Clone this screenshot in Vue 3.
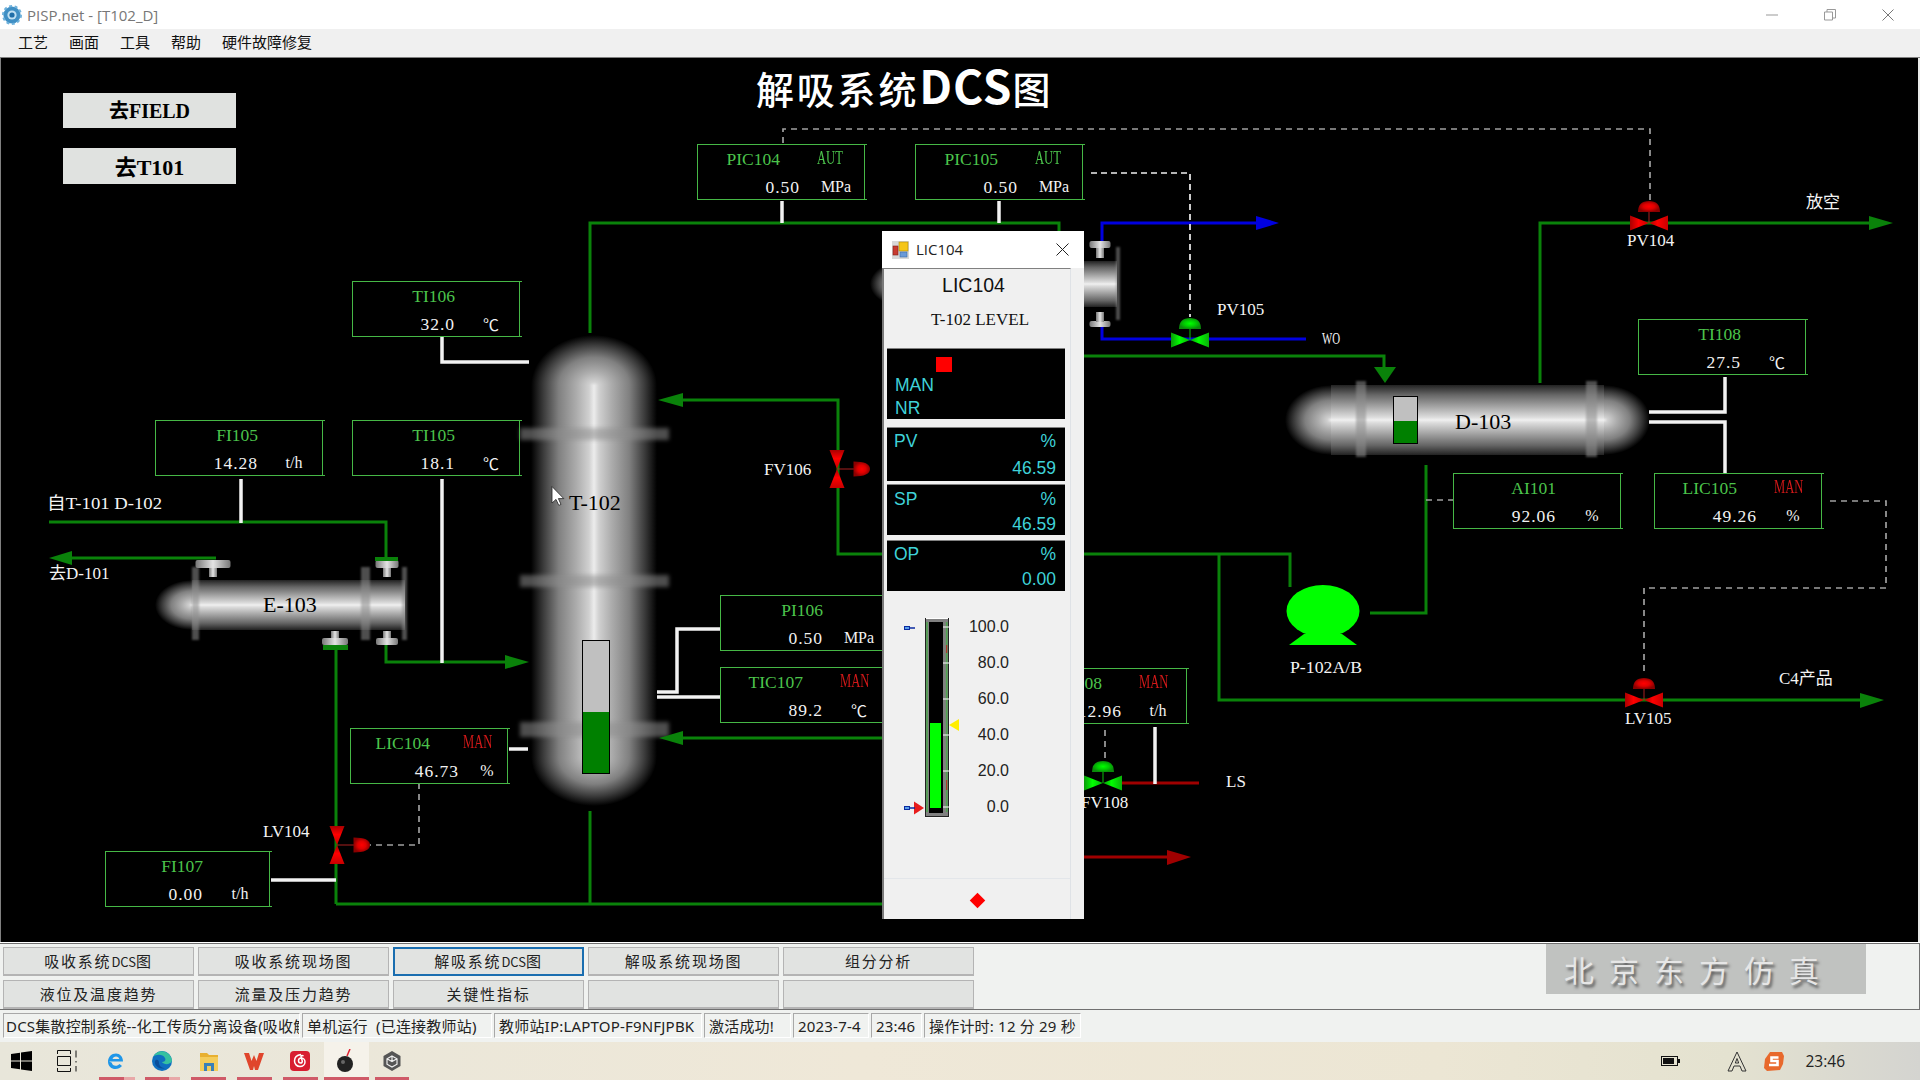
<script setup>
const menus = ["工艺", "画面", "工具", "帮助", "硬件故障修复"];

const tags = [
  { x: 697, y: 144, name: "PIC104", mode: "AUT", value: "0.50", unit: "MPa", ok: true },
  { x: 915, y: 144, name: "PIC105", mode: "AUT", value: "0.50", unit: "MPa", ok: true },
  { x: 352, y: 281, name: "TI106", value: "32.0", unit: "℃" },
  { x: 155, y: 420, name: "FI105", value: "14.28", unit: "t/h" },
  { x: 352, y: 420, name: "TI105", value: "18.1", unit: "℃" },
  { x: 350, y: 728, w: 160, split: 108, compact: true, name: "LIC104", mode: "MAN", value: "46.73", unit: "%" },
  { x: 720, y: 595, name: "PI106", value: "0.50", unit: "MPa" },
  { x: 720, y: 667, name: "TIC107", mode: "MAN", value: "89.2", unit: "℃" },
  { x: 1019, y: 668, name: "FIC108", mode: "MAN", value: "12.96", unit: "t/h" },
  { x: 1638, y: 319, name: "TI108", value: "27.5", unit: "℃" },
  { x: 1453, y: 473, name: "AI101", value: "92.06", unit: "%" },
  { x: 1654, y: 473, name: "LIC105", mode: "MAN", value: "49.26", unit: "%" },
  { x: 105, y: 851, w: 167, split: 97, name: "FI107", value: "0.00", unit: "t/h" },
];

const pipes = [
  { cls: "green", pts: "590,333 590,223 1059,223 1059,232" },
  { cls: "green", pts: "49,522 386,522 386,560" },
  { cls: "green", pts: "216,558 65,558" },
  { cls: "green", pts: "386,645 386,662 510,662" },
  { cls: "green", pts: "336,904 336,648" },
  { cls: "green", pts: "670,400 838,400 838,554 882,554" },
  { cls: "green", pts: "590,811 590,904" },
  { cls: "green", pts: "336,904 882,904" },
  { cls: "green", pts: "670,738 882,738" },
  { cls: "green", pts: "1084,356 1384,356 1384,370" },
  { cls: "green", pts: "1540,383 1540,223 1872,223" },
  { cls: "green", pts: "1084,554 1290,554 1290,587" },
  { cls: "green", pts: "1219,554 1219,700 1864,700" },
  { cls: "green", pts: "1426,465 1426,613 1370,613" },
  { cls: "blue", pts: "1102,241 1102,223 1260,223" },
  { cls: "blue", pts: "1102,327 1102,339 1306,339" },
  { cls: "red", pts: "1122,783 1199,783" },
  { cls: "red", pts: "1084,857 1172,857" },
  { cls: "white", pts: "782,201 782,223" },
  { cls: "white", pts: "999,201 999,223" },
  { cls: "white", pts: "442,337 442,362 529,362" },
  { cls: "white", pts: "241,479 241,523" },
  { cls: "white", pts: "442,479 442,663" },
  { cls: "white", pts: "509,749 528,749" },
  { cls: "white", pts: "657,692 677,692 677,629 720,629" },
  { cls: "white", pts: "657,697 720,697" },
  { cls: "white", pts: "1649,412 1725,412 1725,377" },
  { cls: "white", pts: "1649,422 1725,422 1725,473" },
  { cls: "white", pts: "1155,727 1155,784" },
  { cls: "white", pts: "271,880 336,880" },
  { cls: "dash", pts: "783,143 783,129 1650,129 1650,200" },
  { cls: "dash", pts: "1830,501 1886,501 1886,588 1644,588 1644,673" },
  { cls: "dash", pts: "1426,500 1453,500" },
  { cls: "dash", pts: "419,783 419,845 367,845" },
  { cls: "dash", pts: "1105,730 1105,760" },
  { cls: "dash-white", pts: "1091,173 1190,173 1190,317" },
];

const arrows = [
  { fill: "#0a820a", pts: "49,558 72,551 72,565" },
  { fill: "#0a820a", pts: "529,662 505,655 505,669" },
  { fill: "#0a820a", pts: "658,400 683,393 683,407" },
  { fill: "#0a820a", pts: "659,738 683,731 683,745" },
  { fill: "#0a820a", pts: "1385,383 1374,367 1396,367" },
  { fill: "#0a820a", pts: "1893,223 1869,216 1869,230" },
  { fill: "#0a820a", pts: "1884,700 1860,693 1860,708" },
  { fill: "#0000e0", pts: "1279,223 1256,216 1256,230" },
  { fill: "#a00000", pts: "1191,857 1167,850 1167,865" },
];

const valves = [
  { x: 1649, y: 223, color: "red", rot: 0, arm: 0, dome: "" },
  { x: 1644, y: 700, color: "red", rot: 0, arm: 0, dome: "" },
  { x: 1190, y: 340, color: "green", rot: 0, arm: 0, dome: "" },
  { x: 1103, y: 783, color: "green", rot: 0, arm: 0, dome: "" },
  { x: 837, y: 469, color: "red", rot: 90, arm: 5, dome: "scale(.68 1.5)" },
  { x: 337, y: 845, color: "red", rot: 90, arm: 5, dome: "scale(.68 1.5)" },
];

const nozzles = [
  { x: 213, capY: 560, capH: 8, capW: 35, neckY: 568, neckH: 9 },
  { x: 387, capY: 560, capH: 8, capW: 23, neckY: 568, neckH: 9 },
  { x: 335, capY: 638, capH: 7, capW: 26, neckY: 631, neckH: 7 },
  { x: 387, capY: 638, capH: 7, capW: 22, neckY: 631, neckH: 7 },
  { x: 1100, capY: 241, capH: 7, capW: 21, neckY: 248, neckH: 10 },
  { x: 1100, capY: 321, capH: 6, capW: 21, neckY: 312, neckH: 10 },
];

const flanges = [
  { x: 520, y: 428, w: 149, h: 12, soft: "blur-wide" },
  { x: 520, y: 575, w: 149, h: 12, soft: "blur-wide" },
  { x: 520, y: 722, w: 149, h: 15, soft: "blur-wide" },
  { x: 1356, y: 381, w: 10, h: 76 },
  { x: 1586, y: 381, w: 11, h: 76 },
  { x: 192, y: 567, w: 7, h: 73 },
  { x: 361, y: 567, w: 9, h: 73 },
  { x: 402, y: 567, w: 5, h: 73 },
  { x: 1116, y: 247, w: 4, h: 73 },
];

const labels = [
  { x: 47, y: 503, text: "自T-101 D-102", len: 115 },
  { x: 49, y: 573, text: "去D-101" },
  { x: 764, y: 469, text: "FV106" },
  { x: 263, y: 831, text: "LV104" },
  { x: 1217, y: 309, text: "PV105" },
  { x: 1322, y: 338, text: "WO", len: 18 },
  { x: 1627, y: 240, text: "PV104" },
  { x: 1806, y: 202, text: "放空" },
  { x: 1290, y: 667, text: "P-102A/B", len: 72 },
  { x: 1625, y: 718, text: "LV105" },
  { x: 1779, y: 678, text: "C4产品" },
  { x: 1081, y: 802, text: "FV108" },
  { x: 1226, y: 781, text: "LS" },
];

const buttons = [
  { text: "吸收系统", latin: "DCS", tail: "图" },
  { text: "吸收系统现场图" },
  { text: "解吸系统", latin: "DCS", tail: "图", active: true },
  { text: "解吸系统现场图" },
  { text: "组分分析" },
  { text: "液位及温度趋势" },
  { text: "流量及压力趋势" },
  { text: "关键性指标" },
  { text: "" },
  { text: "" },
];

const statusCells = [
  { w: 297, text: "DCS集散控制系统--化工传质分离设备(吸收解" },
  { w: 190, text: "单机运行  (已连接教师站)" },
  { w: 208, text: "教师站IP:LAPTOP-F9NFJPBK" },
  { w: 87, text: "激活成功!" },
  { w: 76, text: "2023-7-4" },
  { w: 51, text: "23:46" },
  { w: 157, text: "操作计时: 12 分 29 秒" },
];

const logoChars = ["北", "京", "东", "方", "仿", "真"];
const scale = ["100.0", "80.0", "60.0", "40.0", "20.0", "0.0"];
const ticks = [627, 663, 699, 735, 771, 807];
const underlines = [
  { x: 99, w: 36, split: true },
  { x: 145, w: 35, split: true },
  { x: 191, w: 35 },
  { x: 237, w: 35 },
  { x: 283, w: 35 },
  { x: 324, w: 45 },
  { x: 375, w: 34 },
];

const tagStyle = (tag) => ({
  left: `${tag.x}px`,
  top: `${tag.y - 58}px`,
  width: `${tag.w || 170}px`,
  gridTemplateColumns: `${tag.split || 102}px 1fr`,
});
</script>

<template>
  <div class="app">
    <header class="titlebar">
      <svg class="app-icon" width="20" height="20" viewBox="0 0 20 20">
        <circle cx="10" cy="10" r="8.6" fill="#3f8fc4" />
        <circle cx="10" cy="10" r="9" fill="none" stroke="#6fb2dc" stroke-width="2" stroke-dasharray="3 2.6" />
        <circle cx="10" cy="10" r="4.6" fill="#bfe0f2" />
        <circle cx="10" cy="10" r="2.6" fill="#1f6ea8" />
      </svg>
      <span class="title-text">PISP.net - [T102_D]</span>
      <div class="win-controls">
        <svg width="12" height="12" viewBox="0 0 12 12"><path d="M0 6h12" stroke="#999" fill="none" /></svg>
        <svg width="12" height="12" viewBox="0 0 12 12"><path d="M.5 3h8v8h-8zM3 3V.5h8.5V9H8.5" stroke="#999" fill="none" /></svg>
        <svg width="12" height="12" viewBox="0 0 12 12"><path d="M.5.5l11 11M11.5.5l-11 11" stroke="#777" fill="none" /></svg>
      </div>
    </header>

    <nav class="menubar">
      <span v-for="m in menus" :key="m" class="menu-item">{{ m }}</span>
    </nav>

    <main class="canvas">
      <svg class="diagram" width="1920" height="884" viewBox="0 58 1920 884">
        <defs>
          <linearGradient id="tube-h" x1="0" y1="0" x2="1" y2="0">
            <stop offset="0" stop-color="#000" />
            <stop offset="0.1" stop-color="#3c3c3c" />
            <stop offset="0.22" stop-color="#808080" />
            <stop offset="0.36" stop-color="#acacac" />
            <stop offset="0.46" stop-color="#d0d0d0" />
            <stop offset="0.5" stop-color="#ececec" />
            <stop offset="0.54" stop-color="#d0d0d0" />
            <stop offset="0.64" stop-color="#acacac" />
            <stop offset="0.78" stop-color="#808080" />
            <stop offset="0.9" stop-color="#3c3c3c" />
            <stop offset="1" stop-color="#000" />
          </linearGradient>
          <linearGradient id="tube-v" x1="0" y1="0" x2="0" y2="1">
            <stop offset="0" stop-color="#222" />
            <stop offset="0.14" stop-color="#666" />
            <stop offset="0.34" stop-color="#b0b0b0" />
            <stop offset="0.46" stop-color="#dcdcdc" />
            <stop offset="0.5" stop-color="#f0f0f0" />
            <stop offset="0.54" stop-color="#dcdcdc" />
            <stop offset="0.66" stop-color="#b0b0b0" />
            <stop offset="0.86" stop-color="#666" />
            <stop offset="1" stop-color="#222" />
          </linearGradient>
          <radialGradient id="tube-r">
            <stop offset="0" stop-color="#ececec" />
            <stop offset="0.08" stop-color="#d0d0d0" />
            <stop offset="0.28" stop-color="#acacac" />
            <stop offset="0.56" stop-color="#808080" />
            <stop offset="0.8" stop-color="#3c3c3c" />
            <stop offset="1" stop-color="#000" />
          </radialGradient>
          <linearGradient id="nozzle" x1="0" y1="0" x2="1" y2="0">
            <stop offset="0" stop-color="#777" />
            <stop offset="0.5" stop-color="#e4e4e4" />
            <stop offset="1" stop-color="#777" />
          </linearGradient>
          <linearGradient id="tie-red-l" x1="0" y1="0" x2="1" y2="0">
            <stop offset="0" stop-color="#a80000" />
            <stop offset="0.45" stop-color="#ff0000" />
            <stop offset="1" stop-color="#c80000" />
          </linearGradient>
          <linearGradient id="tie-green-l" x1="0" y1="0" x2="1" y2="0">
            <stop offset="0" stop-color="#0a9a0a" />
            <stop offset="0.45" stop-color="#00ff00" />
            <stop offset="1" stop-color="#0ab00a" />
          </linearGradient>
          <radialGradient id="dome-red">
            <stop offset="0" stop-color="#ff0000" />
            <stop offset="0.5" stop-color="#e00000" />
            <stop offset="1" stop-color="#8a0000" />
          </radialGradient>
          <radialGradient id="dome-green">
            <stop offset="0" stop-color="#00ff00" />
            <stop offset="0.5" stop-color="#00d000" />
            <stop offset="1" stop-color="#0a8a0a" />
          </radialGradient>
          <filter id="soft" x="-30%" y="-10%" width="160%" height="120%">
            <feGaussianBlur stdDeviation="1.2" />
          </filter>
          <filter id="blur-wide" x="-10%" y="-50%" width="120%" height="200%">
            <feGaussianBlur stdDeviation="2.2" />
          </filter>
        </defs>

        <!-- vessels -->
        <g>
          <ellipse cx="594" cy="386" rx="63" ry="51" fill="url(#tube-r)" />
          <ellipse cx="594" cy="756" rx="63" ry="50" fill="url(#tube-r)" />
          <rect x="531" y="386" width="126" height="370" fill="url(#tube-h)" />

          <ellipse cx="1331" cy="420" rx="46" ry="35" fill="url(#tube-r)" />
          <ellipse cx="1604" cy="420" rx="46" ry="35" fill="url(#tube-r)" />
          <rect x="1331" y="385" width="273" height="70" fill="url(#tube-v)" />

          <ellipse cx="192" cy="605" rx="37" ry="25" fill="url(#tube-r)" />
          <rect x="192" y="580" width="213" height="50" fill="url(#tube-v)" />

          <ellipse cx="905" cy="284" rx="35" ry="23" fill="url(#tube-r)" />
          <rect x="905" y="261" width="212" height="46" fill="url(#tube-v)" />
        </g>
        <rect
          v-for="(f, i) in flanges"
          :key="'f' + i"
          :x="f.x"
          :y="f.y"
          :width="f.w"
          :height="f.h"
          fill="#8e8e8e"
          opacity="0.55"
          :filter="`url(#${f.soft || 'soft'})`"
        />
        <g v-for="(n, i) in nozzles" :key="'n' + i">
          <rect :x="n.x - n.capW / 2" :y="n.capY" :width="n.capW" :height="n.capH" rx="2" fill="url(#nozzle)" />
          <rect :x="n.x - 4" :y="n.neckY" width="8" :height="n.neckH" fill="url(#nozzle)" />
        </g>

        <!-- level gauges -->
        <rect x="582.5" y="640.5" width="27" height="133" fill="#c0c0c0" stroke="#000" />
        <rect x="583" y="712" width="26" height="61" fill="#008000" />
        <rect x="1393.5" y="396.5" width="24" height="47" fill="#c0c0c0" stroke="#000" />
        <rect x="1394" y="421" width="23" height="22" fill="#008000" />

        <!-- pipe lines -->
        <polyline v-for="(p, i) in pipes" :key="'p' + i" :points="p.pts" :class="['line', p.cls]" />
        <polygon v-for="(a, i) in arrows" :key="'a' + i" :points="a.pts" :fill="a.fill" />
        <rect x="375" y="557" width="23" height="4" fill="#0a820a" />
        <rect x="323" y="645" width="25" height="5" fill="#0a820a" />

        <!-- valves -->
        <g v-for="(v, i) in valves" :key="'v' + i" :transform="`translate(${v.x} ${v.y}) rotate(${v.rot})`">
          <path :d="`M0 0V${-12 - v.arm}`" :stroke="v.color === 'red' ? '#a82020' : '#0ac00a'" fill="none" />
          <path d="M-19-7.5L0 0-19 7.5Z" :fill="`url(#tie-${v.color}-l)`" />
          <path d="M19-7.5L0 0 19 7.5Z" :fill="`url(#tie-${v.color}-l)`" />
          <path :transform="v.dome" d="M-11-11Q-11-22 0-22 11-22 11-11Z" :fill="`url(#dome-${v.color})`" />
        </g>

        <!-- pump -->
        <path d="M1289 645L1304 634H1342L1357 645Z" fill="#00ff00" />
        <ellipse cx="1323" cy="611" rx="36.5" ry="26" fill="#00ff00" />

        <!-- texts -->
        <text x="756" y="104" class="page-title">解吸系统<tspan class="page-title-latin">DCS</tspan>图</text>
        <text
          v-for="l in labels"
          :key="l.text"
          :x="l.x"
          :y="l.y"
          :textLength="l.len"
          lengthAdjust="spacingAndGlyphs"
          class="label"
        >{{ l.text }}</text>
        <text x="569" y="502" class="vessel-label">T-102</text>
        <text x="263" y="604" class="vessel-label">E-103</text>
        <text x="1455" y="421" class="vessel-label">D-103</text>

        <!-- mouse pointer -->
        <path d="M552 486.5V503l4-3.6 2.8 6 2.2-1-2.6-5.8h5.4Z" fill="#fff" stroke="#222" stroke-width=".8" />
      </svg>

      <button class="jump jump-field">去FIELD</button>
      <button class="jump jump-t101">去T101</button>

      <div v-for="t in tags" :key="t.name" class="tag" :class="{ compact: t.compact }" :style="tagStyle(t)">
        <span class="tag-name" :class="{ 'has-mode': t.mode }">{{ t.name }}</span>
        <span class="tag-mode" :class="{ ok: t.ok }">{{ t.mode }}</span>
        <span class="tag-value">{{ t.value }}</span>
        <span class="tag-unit">{{ t.unit }}</span>
      </div>

      <section class="faceplate">
        <div class="fp-titlebar">
          <svg width="17" height="18" viewBox="0 0 17 18">
            <rect width="17" height="18" fill="#d8d8d8" />
            <rect x="7" y="1" width="9" height="9" fill="#f5c518" stroke="#b08a10" stroke-width=".6" />
            <rect x="1" y="5" width="5" height="9" fill="#c83a30" stroke="#802018" stroke-width=".6" />
            <rect x="8" y="11" width="7" height="5" fill="#6a9ad8" stroke="#3a6aa8" stroke-width=".6" />
          </svg>
          <span class="fp-title">LIC104</span>
          <svg class="fp-close" width="13" height="13" viewBox="0 0 13 13">
            <path d="M.5.5l12 12M12.5.5l-12 12" stroke="#222" fill="none" />
          </svg>
        </div>

        <div class="fp-body">
          <div class="fp-name">LIC104</div>
          <div class="fp-desc">T-102 LEVEL</div>

          <div class="fp-mode">
            <div class="mode-lamp"></div>
            <div class="fp-line">MAN</div>
            <div class="fp-line">NR</div>
          </div>

          <div class="fp-block pv-block">
            <div class="fp-row"><span>PV</span><span>%</span></div>
            <div class="fp-row end"><span>46.59</span></div>
          </div>
          <div class="fp-block sp-block">
            <div class="fp-row"><span>SP</span><span>%</span></div>
            <div class="fp-row end"><span>46.59</span></div>
          </div>
          <div class="fp-block op-block">
            <div class="fp-row"><span>OP</span><span>%</span></div>
            <div class="fp-row end"><span>0.00</span></div>
          </div>

          <div class="fp-gauge">
            <svg width="64" height="210" viewBox="900 612 64 210">
              <rect x="925" y="618" width="24" height="199" fill="#808080" />
              <path d="M925 618.5H949M949 618V817M925 817H949" stroke="#fff" fill="none" />
              <path d="M925.5 618V817M925 816.5H949M948.5 618V817" stroke="#222" fill="none" />
              <path d="M927 622V812M946.7 622V812" stroke="#4fa24f" stroke-width="1.6" fill="none" />
              <rect x="929" y="622" width="14" height="191" fill="#000" />
              <rect x="930" y="723" width="11" height="85" fill="#00ff00" />
              <path v-for="t in ticks" :key="t" :d="`M943 ${t}H949`" stroke="#fff" fill="none" />
              <path d="M946.7 645V653M946.7 780V790" stroke="#c02020" stroke-width="1" fill="none" />
              <polygon points="949,725 959,719 959,731" fill="#ffee00" />
              <polygon points="924,808 914,801.5 914,814.5" fill="#e81c1c" />
              <g fill="#5aa0e8" stroke="#0a2aa0">
                <rect x="904.5" y="626.5" width="5" height="3" />
                <rect x="904.5" y="806.5" width="5" height="3" />
              </g>
              <path d="M910 628H915M910 808H915" stroke="#0a2aa0" stroke-width="1.5" fill="none" />
            </svg>
            <div class="scale">
              <span v-for="s in scale" :key="s">{{ s }}</span>
            </div>
          </div>

          <div class="fp-foot">
            <div class="diamond"></div>
          </div>
        </div>
      </section>
    </main>

    <section class="ctrl-panel">
      <div class="btn-grid">
        <div v-for="(b, i) in buttons" :key="i" class="nav-btn" :class="{ active: b.active }">
          <span>{{ b.text }}<span v-if="b.latin" class="btn-latin">{{ b.latin }}</span>{{ b.tail }}</span>
        </div>
      </div>
      <div class="logo">
        <span v-for="c in logoChars" :key="c">{{ c }}</span>
      </div>
    </section>

    <footer class="statusbar">
      <span v-for="c in statusCells" :key="c.text" class="status-cell" :style="{ width: c.w + 'px' }">{{ c.text }}</span>
    </footer>

    <div class="taskbar">
      <svg class="tb-win" width="21" height="20" viewBox="0 0 21 20">
        <path d="M0 3l9-1.3V9.5H0zM10 1.5L21 0v9.5H10zM0 10.5h9v7.8L0 17zM10 10.5h11V20l-11-1.5z" fill="#000" />
      </svg>
      <svg class="tb-view" width="21" height="22" viewBox="0 0 21 22">
        <path d="M.5 4V.5h13V4M.5 18v3.5h13V18M.5 6.5h13v9H.5zM19 .5v7M19 11v1.5M19 16v5.5" stroke="#111" fill="none" />
      </svg>
      <svg class="tb-ie" width="20" height="20" viewBox="0 0 20 20">
        <path d="M3 10.5h14c0-5-3.2-8-7-8-4.5 0-8 3.5-8 8.2 0 4.5 3.4 7.3 7.5 7.3 2.5 0 4.8-1 6.500-3l-2.500-2c-1 1.200-2.300 1.800-3.800 1.800-2 0-3.600-1.200-3.900-3h.2zM6.500 8c.5-1.700 1.800-2.600 3.500-2.600 1.700 0 3 1 3.300 2.600z" fill="#1f96e8" fill-rule="evenodd" />
      </svg>
      <svg class="tb-edge" width="20" height="20" viewBox="0 0 20 20">
        <circle cx="10" cy="10" r="10" fill="#0f6fc0" />
        <path d="M20 10a10 10 0 0 0-19-4c3-3 10-3 12 1 1 2 0 4-3 4 2 3 8 3 10-1z" fill="#35c1a0" />
        <path d="M7 12c0 3 3 5 6 5-5 2-11-2-10-7 1-2 4-2 4 2z" fill="#0a4e9a" />
      </svg>
      <svg class="tb-folder" width="18" height="20" viewBox="0 0 18 20">
        <path d="M0 2h7l2 2h9v3H0z" fill="#e8b030" />
        <rect y="6" width="18" height="14" fill="#f4cc5a" />
        <rect x="4" y="12" width="10" height="8" fill="#3a80b8" />
        <rect x="7" y="15" width="4" height="5" fill="#f4cc5a" />
      </svg>
      <svg class="tb-wps" width="20" height="18" viewBox="0 0 20 18">
        <path d="M0 1h5l2.500 8L10 3l2.500 6L15 1h5l-6 17h-3l-1-4-1 4H6z" fill="#e0452c" />
      </svg>
      <svg class="tb-music" width="20" height="20" viewBox="0 0 20 20">
        <rect width="20" height="20" rx="4" fill="#d81e30" />
        <path d="M11 3.500c-4 .5-6.500 3-6.500 6.500 0 3 2.300 5.500 5.500 5.500 2.800 0 5-2 5-4.500 0-2.500-2-4-3.800-4-1.600 0-2.700 1.200-2.700 2.800 0 1.300.8 2.200 2 2.200 1 0 1.800-.8 1.800-1.800L11 5.500c0-1 1.200-1.300 2.500-.5" fill="none" stroke="#fff" stroke-width="1.500" />
      </svg>
      <div class="tb-active">
        <svg width="17" height="24" viewBox="0 0 17 24">
          <circle cx="8" cy="15" r="8" fill="#222" />
          <circle cx="6" cy="13" r="2" fill="#666" />
          <path d="M10 7l3-7" stroke="#e02030" stroke-width="1.500" fill="none" />
        </svg>
      </div>
      <svg class="tb-cube" width="18" height="20" viewBox="0 0 18 20">
        <path d="M9 0l8.500 5v10L9 20 .5 15V5z" fill="#555" />
        <path d="M9 5l5 2.800v5.400L9 16l-5-2.800V7.800zM9 5v5.500M4 7.800l5 2.700 5-2.700" fill="none" stroke="#eee" stroke-width="1.200" />
      </svg>

      <div class="tb-tray">
        <svg class="tb-battery" width="19" height="10" viewBox="0 0 19 10">
          <rect x=".5" y=".5" width="16" height="9" fill="none" stroke="#111" />
          <rect x="2" y="2" width="11" height="6" fill="#111" />
          <rect x="17" y="3" width="2" height="4" fill="#111" />
        </svg>
        <svg class="tb-ime" width="20" height="21" viewBox="0 0 20 21">
          <path d="M10 1L1 20h4l2-5h6l2 5h4zM8.300 12L10 7.500l1.700 4.500z" fill="none" stroke="#333" />
        </svg>
        <svg class="tb-sogou" width="20" height="19" viewBox="0 0 20 19">
          <path d="M6 0h12l2 4-1 8-3 6-13 1-3-3 1-9z" fill="#e8692c" />
          <path d="M14.500 5.500H7.500v3.500h6v4H5" fill="none" stroke="#fff" stroke-width="2.600" />
        </svg>
        <span class="tb-clock">23:46</span>
      </div>

      <span
        v-for="u in underlines"
        :key="u.x"
        class="tb-underline"
        :class="{ split: u.split }"
        :style="{ left: u.x + 'px', width: u.w + 'px' }"
      ></span>
    </div>
  </div>
</template>

<style>
html,
body {
  margin: 0;
  background: #f0f0f0;
  overflow: hidden;
}
</style>

<style scoped>
.app {
  width: 1920px;
  height: 1080px;
  display: flex;
  flex-direction: column;
  overflow: hidden;
  background: #f0f2f0;
  font-family: "Noto Sans", "Noto Sans CJK SC", sans-serif;
}

.titlebar {
  height: 29px;
  display: flex;
  align-items: center;
  background: #fff;
  padding-left: 2px;
}

.title-text {
  margin-left: 5px;
  font-size: 15px;
  color: #777;
  font-family: "Open Sans", "Noto Sans CJK SC", sans-serif;
}

.win-controls {
  margin-left: auto;
  margin-right: 26px;
  display: flex;
  gap: 46px;
}

.menubar {
  height: 28px;
  box-sizing: content-box;
  display: flex;
  align-items: center;
  gap: 21px;
  padding-left: 18px;
  background: #f0f0f0;
  border-bottom: 1px solid #808080;
  font-size: 15px;
  color: #111;
  font-family: "Noto Sans CJK SC", sans-serif;
}

.menu-item {
  margin-top: -3px;
}

.canvas {
  position: relative;
  height: 884px;
  flex: none;
  background: #000;
  overflow: hidden;
  box-shadow: inset 1px 0 0 #808080, inset -2px 0 0 #e8eae8;
  border-bottom: 1px solid #fff;
  box-sizing: content-box;
}

.diagram {
  display: block;
}

.line {
  fill: none;
  stroke-width: 3;
}

.green {
  stroke: #0a820a;
}

.blue {
  stroke: #0000e0;
}

.red {
  stroke: #a00000;
}

.white {
  stroke: #f2f2f2;
  stroke-width: 3.5;
}

.dash {
  stroke: #a0a0a0;
  stroke-width: 1.7;
  stroke-dasharray: 6 5;
}

.dash-white {
  stroke: #f0f0f0;
  stroke-width: 1.7;
  stroke-dasharray: 6 4;
}

.page-title {
  font-family: "Noto Sans CJK SC", sans-serif;
  font-size: 38px;
  font-weight: 500;
  fill: #fff;
  letter-spacing: 2.8px;
}

.page-title-latin {
  font-size: 46px;
  font-weight: 700;
  letter-spacing: 1px;
}

.label {
  font-family: "Liberation Serif", "Noto Sans CJK SC", serif;
  font-size: 17px;
  fill: #f4f4f4;
  dominant-baseline: central;
}

.vessel-label {
  font-family: "Liberation Serif", serif;
  font-size: 22px;
  fill: #000;
  dominant-baseline: central;
}

.jump {
  position: absolute;
  left: 63px;
  width: 173px;
  padding: 0 0 2px;
  border: none;
  background: #e0e2e0;
  color: #000;
  font-family: "Liberation Serif", "Noto Sans CJK SC", serif;
  font-weight: 700;
}

.jump-field {
  top: 35px;
  height: 35px;
  font-size: 20px;
}

.jump-t101 {
  top: 90px;
  height: 36px;
  font-size: 22px;
}

.tag {
  position: absolute;
  box-sizing: border-box;
  height: 56px;
  display: grid;
  grid-template-rows: 29px 27px;
  border: 1px solid #46b846;
  border-right: none;
  font-family: "Liberation Serif", "Noto Sans CJK SC", serif;
  font-size: 17.5px;
  white-space: nowrap;
}

.tag::after {
  content: "";
  position: absolute;
  top: 0;
  bottom: 0;
  right: 2px;
  width: 1px;
  background: #46b846;
}

.tag-name {
  align-self: center;
  text-align: right;
  color: #4cc44c;
}

.tag-name.has-mode {
  padding-right: 20px;
}

.tag-mode {
  align-self: center;
  justify-self: start;
  padding-left: 17px;
  margin-top: -3px;
  color: #d01818;
  font-size: 18px;
  transform: scaleX(0.7);
  transform-origin: 17px 50%;
}

.tag-mode.ok {
  color: #4cc44c;
}

.compact .tag-name.has-mode {
  padding-right: 29px;
}

.compact .tag-mode {
  padding-left: 4px;
  transform-origin: 4px 50%;
}

.tag-value {
  align-self: center;
  text-align: right;
  color: #f2f2f2;
  letter-spacing: 1px;
}

.tag-unit {
  align-self: center;
  margin-top: -2px;
  padding-left: 5px;
  text-align: center;
  color: #f2f2f2;
  font-size: 16px;
}

.faceplate {
  position: absolute;
  left: 882px;
  top: 173px;
  width: 202px;
  height: 688px;
  display: flex;
  flex-direction: column;
  background: #f0f0f0;
}

.fp-titlebar {
  height: 37px;
  flex: none;
  display: flex;
  align-items: center;
  background: #fff;
  padding-left: 10px;
}

.fp-title {
  margin-left: 7px;
  margin-top: -2px;
  font-family: "Open Sans", sans-serif;
  font-size: 15px;
  color: #222;
}

.fp-close {
  margin-left: auto;
  margin-right: 15px;
}

.fp-body {
  flex: 1;
  box-sizing: border-box;
  width: 189px;
  border-left: 2px solid #7a7a7a;
  border-top: 1px solid #808080;
  border-right: 1px solid #dfe2e6;
  display: flex;
  flex-direction: column;
  color: #111;
}

.fp-name {
  height: 32px;
  line-height: 32px;
  text-align: center;
  padding-right: 7px;
  font-family: "Liberation Sans", sans-serif;
  font-size: 19.5px;
}

.fp-desc {
  height: 28px;
  margin-top: 5px;
  line-height: 28px;
  text-align: center;
  padding-left: 6px;
  font-family: "Liberation Serif", serif;
  font-size: 17px;
}

.fp-mode,
.fp-block {
  width: 178px;
  margin-left: 3px;
  box-sizing: border-box;
  background: #000;
  border-top: 1px solid #808080;
  color: #3fd2d8;
  font-family: "Liberation Sans", sans-serif;
  font-size: 17.5px;
}

.fp-mode {
  height: 71px;
  margin-top: 14px;
  padding-left: 8px;
}

.mode-lamp {
  width: 16px;
  height: 15px;
  margin: 8px 0 2px 41px;
  background: #f00;
}

.fp-line {
  height: 22.5px;
  line-height: 22.5px;
}

.fp-block {
  padding: 0 9px 0 7px;
}

.pv-block {
  height: 54px;
  margin-top: 8px;
}

.pv-block .fp-row.end {
  margin-top: 2px;
}

.sp-block {
  height: 51px;
  margin-top: 3px;
}

.sp-block .fp-row {
  position: relative;
  top: 1px;
}

.op-block {
  height: 51px;
  margin-top: 5px;
}

.fp-row {
  display: flex;
  justify-content: space-between;
  height: 25px;
  line-height: 26px;
}

.fp-row.end {
  justify-content: flex-end;
}

.fp-gauge {
  margin-top: 21px;
  margin-left: 16px;
  display: flex;
  align-items: flex-start;
  flex: none;
}

.fp-gauge svg {
  display: block;
}

.scale {
  width: 45px;
  margin-top: -3px;
  display: flex;
  flex-direction: column;
  font-family: "Liberation Sans", sans-serif;
  font-size: 16px;
  color: #222;
  text-align: right;
}

.scale span {
  height: 36px;
  line-height: 36px;
}

.fp-foot {
  margin-top: 53px;
  flex: 1;
  border-top: 1px solid #e3e6ea;
  display: flex;
  justify-content: center;
  padding-top: 16px;
}

.diamond {
  width: 11px;
  height: 11px;
  background: #f00;
  transform: rotate(45deg);
}

.ctrl-panel {
  height: 67px;
  flex: none;
  box-sizing: border-box;
  padding: 3px 3px 0;
  background: #f0f2f0;
  border-top: 1px solid #707070;
  border-bottom: 1px solid #707070;
  border-right: 1px solid #707070;
  position: relative;
  display: flex;
}

.btn-grid {
  display: grid;
  grid-template-columns: repeat(5, 191px);
  grid-template-rows: 29px 29px;
  column-gap: 4px;
  row-gap: 4px;
}

.nav-btn {
  box-sizing: border-box;
  display: flex;
  align-items: center;
  justify-content: center;
  padding-bottom: 2px;
  background: #e1e3e1;
  border: 1px solid #b4b4b4;
  border-bottom-width: 2px;
  font-family: "Noto Sans CJK SC", sans-serif;
  font-size: 15px;
  letter-spacing: 1.8px;
  color: #222;
}

.btn-latin {
  font-size: 13px;
  letter-spacing: 0;
}

.nav-btn.active {
  border: 2px solid #1a6eb0;
}

.logo {
  margin-left: auto;
  margin-right: 50px;
  margin-top: -3px;
  width: 320px;
  height: 50px;
  background: #c0c2c0;
  display: flex;
  align-items: center;
  padding-left: 18px;
  box-sizing: border-box;
  font-family: "Noto Sans CJK SC", sans-serif;
  font-size: 30px;
  color: #e6e6e6;
  text-shadow: 2px 3px 3px #555;
}

.logo span {
  width: 45px;
}

.statusbar {
  height: 32px;
  flex: none;
  box-sizing: border-box;
  padding: 3px 0 4px 3px;
  display: flex;
  gap: 2px;
  background: #f0f2f0;
}

.status-cell {
  box-sizing: border-box;
  height: 25px;
  padding-left: 4px;
  line-height: 24px;
  overflow: hidden;
  white-space: pre;
  font-family: "Noto Sans", "Noto Sans CJK SC", sans-serif;
  font-size: 15px;
  letter-spacing: 0.2px;
  color: #222;
  border-top: 1px solid #a8a8a8;
  border-left: 1px solid #a8a8a8;
  border-right: 1px solid #fff;
  border-bottom: 1px solid #fff;
}

.status-cell:first-child {
  padding-left: 2px;
}

.taskbar {
  position: relative;
  height: 38px;
  flex: none;
  display: flex;
  align-items: center;
  background: linear-gradient(90deg, #e8e6da 0%, #efe8d8 45%, #ece6d4 75%, #e4e2d0 90%, #d4d4d0 100%);
}

.tb-win {
  margin-left: 11px;
}

.tb-view {
  margin-left: 25px;
}

.tb-ie {
  margin-left: 28px;
}

.tb-edge {
  margin-left: 26px;
}

.tb-folder {
  margin-left: 28px;
}

.tb-wps {
  margin-left: 26px;
}

.tb-music {
  margin-left: 26px;
}

.tb-active {
  margin-left: 14px;
  width: 45px;
  height: 100%;
  display: flex;
  align-items: center;
  justify-content: center;
  background: #f5f2ea;
}

.tb-active svg {
  margin-left: -2px;
}

.tb-cube {
  margin-left: 14px;
}

.tb-tray {
  margin-left: auto;
  margin-right: 75px;
  display: flex;
  align-items: center;
}

.tb-battery {
  margin-right: 1px;
}

.tb-ime {
  margin-left: 46px;
}

.tb-sogou {
  margin-left: 17px;
}

.tb-clock {
  margin-left: 21px;
  font-size: 15.5px;
  color: #222;
  font-family: "Open Sans", sans-serif;
}

.tb-underline {
  position: absolute;
  bottom: 0;
  height: 3px;
  background: #cf5a68;
}

.tb-underline.split {
  background: linear-gradient(90deg, #cf5a68 70%, #e8a8a8 70%);
}
</style>
